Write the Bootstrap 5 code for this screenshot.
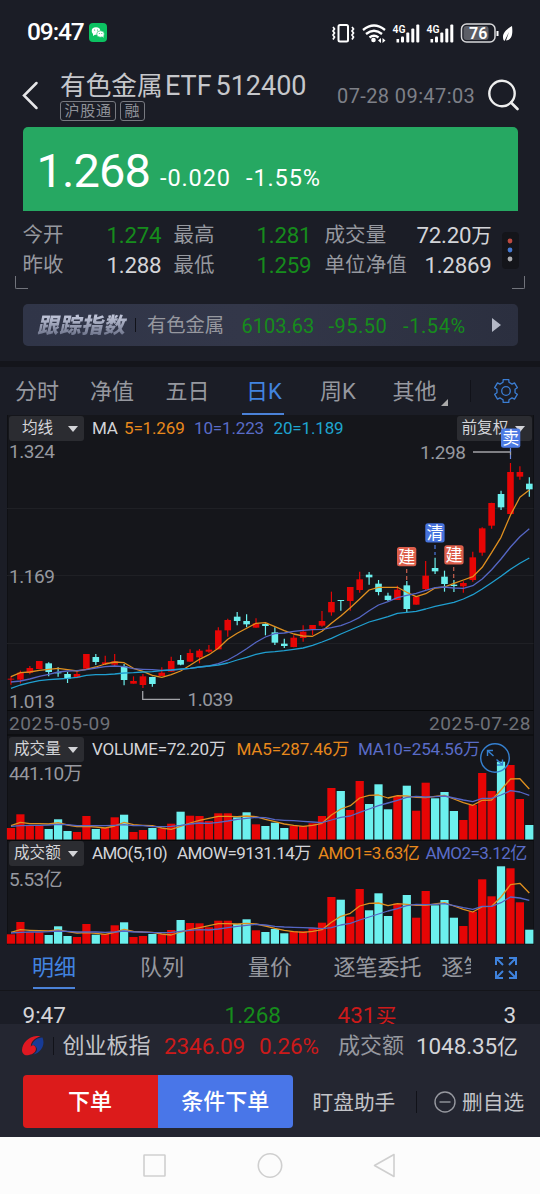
<!DOCTYPE html>
<html lang="zh-CN">
<head>
<meta charset="utf-8">
<meta name="viewport" content="width=device-width, initial-scale=1">
<title>有色金属ETF 512400</title>
<link rel="stylesheet" href="https://cdn.jsdelivr.net/npm/bootstrap@5.3.0/dist/css/bootstrap.min.css">
<style>
:root{--ink:#1b1d26;--pit:#15161b;--muted:#96989f;--pale:#d3d4d8;--up:#cc1a1a;--down:#168c1c;--blue:#4284e0}
body{margin:0;width:540px;height:1194px;overflow:hidden;background:var(--ink);color:var(--muted);font-family:Roboto,"Noto Sans CJK SC",sans-serif;font-size:20px;line-height:1}
svg{display:block;flex:none}
.rowgrid{display:grid;align-items:center;white-space:nowrap}
.rowgrid>*{min-width:0}
.pale{color:var(--pale)}.down{color:var(--down)}.up{color:var(--up)}.act{color:var(--blue)}
.status{height:65px;grid-template-columns:27px 62px 242px 1fr;color:#fff}
.clock{font-size:24.5px;letter-spacing:-1.1px;font-weight:500}
.title-row{height:62px;grid-template-columns:22px 38px 277px 150px 1fr}
.title-txt{font-size:27px;line-height:30px;color:#c6c7cb;display:grid;grid-template-columns:105px 50.5px 1fr}
.title-txt b{font-weight:400;font-size:25.7px}
.tagbox{border:1px solid #777980;border-radius:3px;font-size:15px;height:20.5px;line-height:18px;padding:0 3.5px;letter-spacing:.7px;color:#8f9198}
.date{font-size:20px;letter-spacing:.4px;color:#7e8088}
.quote{margin:0 22.5px;height:84px;background:#26a862;border-radius:5px 5px 0 0;color:#fff;grid-template-columns:14px 123.5px 86px 1fr}
.lastpx{font-size:47px;letter-spacing:-.9px;padding-top:3px}
.chg{font-size:23.5px;letter-spacing:.9px;padding-top:19px}
.stats{padding-top:9px;height:77px;grid-template-columns:22.5px 84px 67px 83px 68px 83px 84px 10px 17px;grid-template-rows:30px 30px;font-size:22.3px;letter-spacing:-.25px}
.stats .k{font-size:20.5px;letter-spacing:.1px;padding-top:1px}
.dotbox{grid-row:1/3;grid-column:9;width:17px;height:37px;border-radius:4px;background:#14151a}
.brackets{height:16px;padding:0 15px}
.brk{width:13px;height:13px;margin-top:-12px;border-bottom:1.5px solid #72747c}
.brk.l{border-left:1.5px solid #72747c;border-radius:0 0 0 2px}
.brk.r{border-right:1.5px solid #72747c;border-radius:0 0 2px 0}
.track{margin:0 22.5px 15px;height:42px;border-radius:5px;background:linear-gradient(90deg,#303548,#333749 45%,#2b2f3f);grid-template-columns:16px 96px 12.5px 94.500px 87px 74.500px 89px 1fr}
.track>span{padding-top:2px}
.tracklogo{font-size:21.5px;font-weight:900;letter-spacing:.5px;transform:skewX(-12deg);background:linear-gradient(#bdc2d6 20%,#71778e 85%);-webkit-background-clip:text;background-clip:text;color:transparent;line-height:26px}
.vsep{width:1px;height:22px;background:#111219}
.band{height:6px;background:#14151b}
.tabs{height:48px;font-size:22px;grid-template-columns:15px 75px 75.5px 80.5px 74px 72.5px 77px 23px 1fr}
.tabs>span:not(.on):not(.vsep){padding-top:2px}
.tabs .on{height:48px;line-height:50px;position:relative}
.on::after{content:"";position:absolute;left:-4px;bottom:0;width:42px;height:2.5px;background:#4b82d8}
.panel{margin:0 6.5px;background:var(--pit);border-left:1px solid #0f1014;border-right:1px solid #0f1014}
.panel>svg{margin-left:-7.5px}
.legend-row{height:26px;font-size:17px;padding-left:1.5px;letter-spacing:-.15px}
.legend-row>span:not(.picker){margin-left:-1px}
.picker{width:75px;height:25px;border-radius:3px;background:#2b2c31;color:var(--pale);font-size:15.6px;letter-spacing:0;display:flex;align-items:center;justify-content:space-between;padding:1px 6.5px 0 5px}
.picker::after{content:"";border:5.5px solid transparent;border-top:6px solid #d3d4d8;border-bottom:0}
.o{color:#e8891c}.p{color:#5a6cc8}.c{color:#1fa5d0}
.sub-tabs{height:46px;font-size:22px;grid-template-columns:32px 108px 108px 85.5px 108px 54px 1fr;border-bottom:1px solid #14151a}
.sub-tabs .on{height:45px;line-height:46px;position:relative}
.sub-tabs .on::after{left:1px;bottom:1px}
.tick{height:33px;overflow:hidden;font-size:22.5px;grid-template-columns:22.5px 202px 113px 166px 1fr;align-items:start;padding-top:13px}
.dock{background:#242631;height:113px}
.indexrow{height:44px;font-size:22.5px;grid-template-columns:22px 30.5px 10px 101.5px 95px 79px 78px 1fr;letter-spacing:-.1px}
.indexrow .k{letter-spacing:0;font-size:22px}
.actions{height:53px;margin-top:7px;grid-template-columns:22.5px 135px 135.5px 19.5px 103.5px 18px 28px 1fr;font-size:20.7px;color:#c2c3c8}
.deal{height:53px;border-radius:4px 0 0 4px;border:0;background:#dc1b1b;color:#fff;font-size:22px;font-weight:500;padding:0}
.deal.b{border-radius:0 4px 4px 0;background:#4976e8}
.sysnav{height:57px;background:#fcfcfc}
text{font-family:Roboto,"Noto Sans CJK SC",sans-serif}
</style>
<script src="https://cdn.jsdelivr.net/npm/bootstrap@5.3.0/dist/js/bootstrap.bundle.min.js"></script>
</head>
<body>
<header class="rowgrid status">
  <span></span><span class="clock">09:47</span>
  <svg width="18" height="19" viewBox="0 0 18 19"><rect width="18" height="19" rx="4" fill="#0cc261"/><ellipse cx="7" cy="8" rx="4.3" ry="3.7" fill="#fff"/><path d="M4 10l0 3 3-2z" fill="#fff"/><ellipse cx="11.5" cy="11" rx="3.8" ry="3.2" fill="#fff" stroke="#0cc261" stroke-width=".6"/><path d="M13 13l1.5 2-.2-3z" fill="#fff"/><g fill="#0cc261"><circle cx="5.6" cy="7" r=".6"/><circle cx="8.5" cy="7" r=".6"/><circle cx="10.3" cy="10.4" r=".5"/><circle cx="12.8" cy="10.4" r=".5"/></g></svg>
  <svg width="186" height="24" viewBox="331 20 186 24" fill="none" stroke="#fff">
    <rect x="338.500" y="24" width="9.500" height="16.500" rx="1.500" stroke-width="2"/><path d="M333 26l1.500 2-1.500 2 1.500 2-1.500 2 1.500 2-1.500 2.500M352 26l1.500 2-1.500 2 1.500 2-1.500 2 1.500 2-1.500 2.500" stroke-width="1.700"/>
    <path d="M363 29q11-9 22 0M366 33q8-6.500 16 0M369.500 36.500q4.500-3.500 9 0" stroke-width="2.300"/><circle cx="373.500" cy="39" r="2.300" fill="#fff" stroke="none"/><path d="M381 37v5l-3-2.500zM382.500 37v5l3-2.500z" fill="#fff" stroke="none"/>
    <g id="cell"><g fill="#fff" stroke="none"><text x="392.500" y="32" font-size="11.500" font-weight="600" textLength="13" lengthAdjust="spacingAndGlyphs">4G</text><rect x="396.500" y="38" width="2.600" height="3.500"/><rect x="401" y="35.500" width="3" height="6" rx="1"/><rect x="406.300" y="31.500" width="3" height="10" rx="1"/><rect x="411.300" y="27.500" width="3" height="14" rx="1"/><rect x="416.300" y="23.500" width="3" height="18" rx="1"/></g></g>
    <use href="#cell" x="34"/>
    <rect x="461.500" y="23" width="33.500" height="18" rx="5" stroke-width="1.500" stroke="#d8d8da"/><rect x="463.500" y="25" width="25" height="14" rx="3" fill="#5c5e66" stroke="none"/>
    <text x="469" y="38" font-size="16" font-weight="600" fill="#fff" stroke="none" textLength="18.500">76</text><rect x="496.500" y="30" width="2" height="5" fill="#fff" stroke="none"/>
    <path d="M503.500 39c-2-6 2-10 8.500-14 1 8 0 14-6 14.500l3-8.500-4.500 9z" fill="#fff" stroke="none"/>
  </svg>
</header>

<section class="rowgrid title-row">
  <span></span>
  <svg width="17" height="30" viewBox="0 0 17 30" style="margin-top:-2px"><path d="M14.500 3L2 15.500 14.500 28" fill="none" stroke="#e6e6e8" stroke-width="2.500" stroke-linecap="round"/></svg>
  <div><div class="title-txt"><b>有色金属</b><span>ETF</span><span>512400</span></div><div class="d-flex gap-1"><span class="tagbox">沪股通</span><span class="tagbox">融</span></div></div>
  <span class="date">07-28 09:47:03</span>
  <svg width="32" height="32" viewBox="486 78 32 32" style="margin-top:-3px"><circle cx="501" cy="92.500" r="12.700" fill="none" stroke="#eee" stroke-width="2.400"/><path d="M510 101.500l6.500 6.500" stroke="#eee" stroke-width="2.600" stroke-linecap="round"/></svg>
</section>

<section class="rowgrid quote">
  <span></span><span class="lastpx">1.268</span><span class="chg">-0.020</span><span class="chg">-1.55%</span>
</section>

<section class="rowgrid stats">
  <span></span><span class="k">今开</span><span class="down">1.274</span><span class="k">最高</span><span class="down">1.281</span><span class="k">成交量</span><span class="pale text-end">72.20<span style="font-size:20.5px">万</span></span><span></span>
  <span class="dotbox d-flex flex-column align-items-center justify-content-center"><svg width="6" height="24" viewBox="0 0 6 24"><circle cx="3" cy="3" r="2.400" fill="#bd4a40"/><circle cx="3" cy="12" r="2.400" fill="#4478d0"/><circle cx="3" cy="21" r="2.400" fill="#aaabae"/></svg></span>
  <span></span><span class="k">昨收</span><span class="pale">1.288</span><span class="k">最低</span><span class="down">1.259</span><span class="k">单位净值</span><span class="pale text-end">1.2869</span><span></span>
</section>
<div class="brackets d-flex justify-content-between"><span class="brk l"></span><span class="brk r"></span></div>

<section class="rowgrid track">
  <span></span><span class="tracklogo">跟踪指数</span><i class="vsep" style="height:14px"></i><span style="font-size:19.3px">有色金属</span>
  <span class="down">6103.63</span><span class="down" style="letter-spacing:.5px">-95.50</span><span class="down" style="letter-spacing:.6px">-1.54%</span>
  <svg width="9" height="14"><path d="M0 0L9 7 0 14z" fill="#b3b7c5"/></svg>
</section>
<div class="band"></div>

<nav class="rowgrid tabs">
  <span></span><span>分时</span><span>净值</span><span>五日</span><span class="act on">日K</span><span>周K</span>
  <span class="d-flex align-items-end">其他<svg class="ms-1" width="7" height="7" style="margin-bottom:-3px"><path d="M7 0V7H0z" fill="#aaa"/></svg></span>
  <span class="vsep"></span>
  <svg width="26" height="26" viewBox="-13 -13 26 26" fill="none" stroke="#3b7dd2" stroke-width="1.300" stroke-linejoin="round"><circle r="4.300"/><path id="gear"/></svg>
</nav>

<section class="panel">
  <div class="rowgrid legend-row" style="grid-template-columns:84px 32px 70px 79.500px 182px 75px">
    <span class="picker" style="padding-left:13px">均线</span><span class="pale">MA</span><span class="o">5=1.269</span><span class="p">10=1.223</span><span class="c">20=1.189</span><span class="picker">前复权</span>
  </div>
  <svg id="kline" width="540" height="295" viewBox="0 441 540 295" style="overflow:visible;position:relative"></svg>
  <div class="rowgrid legend-row" style="grid-template-columns:84px 144.500px 121.500px 1fr">
    <span class="picker">成交量</span><span class="pale">VOLUME=72.20万</span><span class="o">MA5=287.46万</span><span class="p">MA10=254.56万</span>
  </div>
  <svg id="vol" width="540" height="79" viewBox="0 762 540 79" style="overflow:visible;position:relative"></svg>
  <div class="rowgrid legend-row" style="height:25px;letter-spacing:-.55px;grid-template-columns:84px 85px 141px 107.500px 1fr">
    <span class="picker">成交额</span><span class="pale" style="letter-spacing:-.7px">AMO(5,10)</span><span class="pale">AMOW=9131.14万</span><span class="o">AMO1=3.63亿</span><span class="p">AMO2=3.12亿</span>
  </div>
  <svg id="amo" width="540" height="79" viewBox="0 866 540 79" style="overflow:visible;position:relative"></svg>
</section>

<nav class="rowgrid sub-tabs">
  <span></span><span class="act on">明细</span><span>队列</span><span>量价</span><span>逐笔委托</span><span class="overflow-hidden" style="width:29px;line-height:30px">逐笔成交</span>
  <svg width="22" height="22" viewBox="0 0 22 22" fill="none" stroke="#3f82dc" stroke-width="2" style="margin-left:-1px"><path d="M1 8V1H8M1 1L8 8M14 1h7v7M21 1l-7 7M1 14v7H8M1 21l7-7M14 21h7V14M21 21l-7-7"/></svg>
</nav>
<section class="rowgrid tick"><span></span><span class="pale">9:47</span><span class="down">1.268</span><span class="up">431<span style="font-size:21px">买</span></span><span class="pale">3</span></section>

<section class="dock">
  <div class="rowgrid indexrow">
    <span></span>
    <svg width="22" height="20" viewBox="22 1036 22 20"><path d="M42.500 1037.500c3 7-1 15-9 17 4-3 4.500-6 2-8-2-2-4-1-4 0 1-5 5-9 11-9z" fill="#173b96"/><path d="M40.500 1036C30 1035 22.500 1042 22 1050c0 4 3 6 7 5 5-1 8-4 6.500-8-1.500-3-5-2-4.500.5-1-5 3-9 9.500-11.500z" fill="#e01822"/></svg>
    <span class="vsep" style="height:18px"></span><span class="k" style="color:#c2c3c8">创业板指</span><span class="up">2346.09</span><span class="up">0.26%</span><span class="k">成交额</span><span class="pale">1048.35<span style="font-size:21px">亿</span></span>
  </div>
  <div class="rowgrid actions">
    <span></span><button class="deal">下单</button><button class="deal b">条件下单</button><span></span><span class="pt-1">盯盘助手</span><span class="vsep"></span>
    <svg width="22" height="22" viewBox="0 0 22 22" fill="none" stroke="#96989f" stroke-width="1.400"><circle cx="11" cy="11" r="10"/><path d="M5.500 11h11"/></svg><span class="pt-1">删自选</span>
  </div>
</section>
<footer class="sysnav">
  <svg width="540" height="57" viewBox="0 1137 540 57" fill="none" stroke="#cfcfcf" stroke-width="1.600" stroke-linejoin="round"><rect x="144" y="1155" width="21" height="21" rx=".5"/><circle cx="270" cy="1165.500" r="11.700"/><path d="M394 1154.500v22L374.500 1165.500z"/></svg>
</footer>
<script>
// six-lobed outline of the settings icon
(() => {
  let d = '';
  for (let i = 0; i < 6; i++) {
    const a = i * Math.PI / 3;
    [[-.33, 9.2], [-.24, 11.8], [.24, 11.8], [.33, 9.2]].forEach(([o, r], j) => {
      d += (i || j ? 'L' : 'M') + (r * Math.sin(a + o)).toFixed(2) + ' ' + (-r * Math.cos(a + o)).toFixed(2);
    });
  }
  document.getElementById('gear').setAttribute('d', d + 'z');
})();

const RED = '#e60505', CYAN = '#6cf0ee', ORANGE = '#e0901f', PURPLE = '#5566c4', SKY = '#209fd0';
const X = i => 11 + i * 9.424;
// colour, high, low, body top, body bottom (thirds of a pixel below 560)
const K = `r348,374,356,359 r332,370,338,359 r318,343,324,338 r303,327,303,327 c307,349,310,336 c322,350,337,339 c336,369,342,356 r334,355,342,353 r282,330,282,326 c282,315,291,306 r287,315,307,312 r282,318,304,314 c312,376,319,360 r349,371,363,371 r342,384,349,375 c350,380,351,372 r322,348,338,348 r290,335,303,335 c285,316,300,314 r268,305,279,305 r267,310,272,292 r255,278,269,275 r202,268,211,268 r176,230,180,211 c156,196,170,183 c163,202,183,193 r175,203,190,203 c190,226,192,198 c202,255,217,248 c236,264,251,258 r226,262,233,261 r196,245,215,234 r195,225,195,207 r153,200,183,197 r95,167,126,157 c120,152,120,123 r81,152,81,123 r35,98,58,90 c36,74,44,52 c60,106,71,96 c98,123,107,120 r77,120,89,120 c63,157,76,147 r110,134,110,134 r3,92,47,87 c-7,42,24,34 c32,95,50,72 c60,96,74,78 r64,98,69,79 r-25,65,-8,60 r-98,-13,-95,-22 r-172,-94,-171,-103 c-208,-150,-198,-158 r-291,-135,-264,-138 r-281,-241,-264,-250 c-248,-190,-229,-212`.split(' ').map(s => [s[0] === 'r' ? RED : CYAN, ...s.slice(1).split(',').map(v => 560 + v / 3)]);
const MA5 = [350,338,336,331,328,325,329,333,328,321,312,306,308,325,334,346,352,344,333,316,298,284,265,238,220,205,190,188,200,212,222,228,229,214,190,168,143,117,90,82,82,82,97,110,101,84,81,70,60,50,22,-22,-68,-135,-188,-210];
const MA10 = [366,363,357,349,343,336,333,332,329,324,320,318,320,326,328,329,331,330,328,325,321,318,311,300,284,266,247,231,221,219,214,211,209,208,203,197,186,172,152,135,125,113,106,100,91,83,81,84,85,77,57,29,-3,-39,-70,-94];
const MA20 = [385,375,368,362,359,357,355,352,346,344,344,342,339,338,336,335,332,330,327,325,321,318,315,309,300,292,283,277,275,272,268,264,256,246,235,222,210,198,186,178,170,160,157,154,147,139,133,127,117,104,87,68,49,28,10,-6];
const V = [279,238,272,272,282,253,288,291,243,282,278,247,239,291,285,279,280,266,230,242,243,258,235,235,247,232,268,273,263,279,273,273,265,243,159,168,225,138,207,148,223,183,152,227,143,190,171,228,255,210,114,168,80,90,192,270];
const V5 = [272,262,266,266,267,263,270,275,274,276,279,273,262,269,271,272,279,283,274,264,256,250,244,244,245,243,245,253,260,267,271,274,271,265,240,222,212,189,181,180,189,182,183,187,188,184,181,192,203,211,196,195,165,132,131,162];
const V10 = [274,272,271,271,270,268,269,272,272,272,272,271,269,272,272,275,275,274,271,267,264,265,262,258,253,250,247,248,254,256,257,259,261,263,255,247,243,232,222,212,204,196,187,184,186,185,183,189,195,200,190,190,180,167,171,181];
const A = [598,561,592,592,600,574,603,606,567,599,597,571,562,606,603,597,598,585,555,564,565,577,557,557,567,553,586,591,582,595,589,589,580,563,486,494,545,462,526,475,543,506,480,548,468,511,495,548,573,530,433,484,394,400,502,584];
const A5 = [592,584,586,587,588,585,590,594,593,595,598,592,583,589,591,592,597,600,591,584,578,572,566,566,567,565,567,573,580,586,590,592,589,584,562,544,535,513,505,504,512,506,508,511,511,507,503,513,523,531,515,514,486,449,445,474];
const A10 = [594,592,591,591,590,588,589,591,591,591,592,591,588,591,591,593,593,592,589,586,584,585,582,578,574,571,568,570,574,576,577,578,579,581,578,570,565,555,546,537,528,521,512,508,509,508,506,512,518,523,514,514,503,486,489,496];

const curve = (a, base, col) => `<polyline fill="none" stroke="${col}" stroke-width="1.300" stroke-linejoin="round" points="${a.map((v, i) => X(i).toFixed(1) + ',' + (base + v / 3).toFixed(1)).join(' ')}"/>`;
const label = (x, y, w, t, col = '#96989f', s = 19) => `<text x="${x}" y="${y}" font-size="${s}" fill="${col}" textLength="${w}">${t}</text>`;
const rule = (y, col) => `<path d="M7 ${y}H533.500" stroke="${col}"/>`;
const mark = (x, y, t, col) => `<rect x="${x}" y="${y}" width="19.300" height="19.300" rx="2.500" fill="${col}"/><text x="${x + 9.7}" y="${y + 15.7}" text-anchor="middle" font-size="17" font-weight="400" fill="#fff">${t}</text>`;
const dash = (x, y1, y2, col) => `<path d="M${x} ${y1}V${y2}" stroke="${col}" stroke-dasharray="4 3" stroke-width="1.200"/>`;

let s = rule(508.5, '#1f2025') + rule(575.5, '#1f2025') + rule(643.5, '#1f2025') + rule(710.5, '#08090b') + rule(735, '#08090b');
K.forEach(([c, h, l, t, b], i) => {
  s += `<path d="M${X(i)} ${h}V${l}" stroke="${c}" stroke-width="1.200"/><rect x="${X(i) - 3.3}" y="${t}" width="6.600" height="${Math.max(b - t, 1)}" fill="${c}"/>`;
});
s += curve(MA5, 560, ORANGE) + curve(MA10, 560, PURPLE) + curve(MA20, 560, SKY);
s += label(9, 458, 46, '1.324') + label(9, 583, 46, '1.169') + label(9, 707.7, 46, '1.013') + label(187.5, 706, 46, '1.039') + label(420, 459, 46, '1.298');
s += label(9, 730, 101.5, '2025-05-09', '#6f7178') + label(429, 730, 101.5, '2025-07-28', '#6f7178');
s += '<path d="M142.700 691V699.300H180M473 452H510.500V455" fill="none" stroke="#a2a3a8" stroke-width="1.300"/>';
s += dash(510.5, 448, 460, '#6d8be0') + dash(406.7, 569, 582, '#c9604f') + dash(435, 545, 555, '#4a78e0') + dash(453.7, 567, 580, '#c9604f');
s += mark(501, 428.5, '卖', '#4d7be3') + mark(397, 547, '建', '#dc5e4b') + mark(425.3, 523.3, '清', '#4672dc') + mark(444.3, 545.3, '建', '#dc5e4b');
document.getElementById('kline').innerHTML = s;

const bars = (a, base) => a.map((v, i) => `<rect x="${(X(i) - 4.1).toFixed(1)}" y="${(735 + v / 3).toFixed(1)}" width="8.200" height="${(base - 735 - v / 3).toFixed(1)}" fill="${K[i][0]}"/>`).join('');
document.getElementById('vol').innerHTML = bars(V, 839.5) + curve(V5, 735, ORANGE) + curve(V10, 735, PURPLE) + label(9, 780, 73.5, '441.10万') + rule(840.5, '#08090b') +
  '<g fill="none" stroke="#3580d0" stroke-width="1.400"><circle cx="495" cy="758" r="14.300"/><path d="M487.500 756V750.500H493M488 751l5.500 5M496.500 759.500l5.500 5M497 765H502.500V759.500"/></g>';
document.getElementById('amo').innerHTML = bars(A, 943.7) + curve(A5, 735, ORANGE) + curve(A10, 735, PURPLE) + label(9, 885.7, 53.5, '5.53亿');
</script>
</body>
</html>
